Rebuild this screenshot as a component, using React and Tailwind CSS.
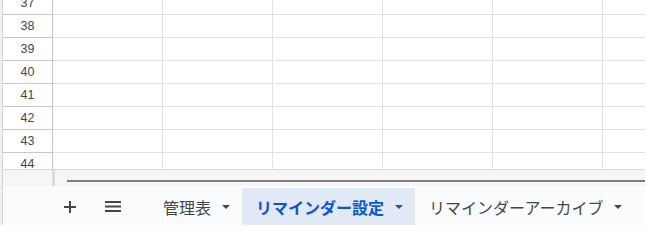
import React from "react";

const rows = [37, 38, 39, 40, 41, 42, 43, 44];
const cols = [0, 1, 2, 3, 4, 5];

function Arrow({ color }) {
  return (
    <svg width="8" height="4" viewBox="0 0 8 4" className="shrink-0">
      <path d="M0 0 L8 0 L4 4 Z" fill={color} />
    </svg>
  );
}

function Tab({ label, active }) {
  return (
    <div
      className={
        "flex h-[37px] shrink-0 items-center pl-[14px] pr-[12px] " +
        (active ? "bg-[#e1e9f7] text-[#0b57d0] font-bold" : "text-[#444746]")
      }
    >
      <span className="whitespace-nowrap text-[16px] leading-none">{label}</span>
      <span className="ml-[11px] flex items-center">
        <Arrow color={active ? "#0b57d0" : "#444746"} />
      </span>
    </div>
  );
}

export default function App() {
  return (
    <div
      className="flex h-[225px] w-[645px] flex-col overflow-hidden bg-[#f0f1f2] pl-[2px]"
      style={{ fontFamily: '"Noto Sans CJK JP", "Liberation Sans", sans-serif' }}
    >
      <div className="flex h-full flex-col border-l border-[#d4d4d4]">
        {/* grid */}
        <div className="h-[170px] shrink-0 overflow-hidden border-b border-[#d9d9d9] bg-white">
          <div className="-mt-[8px] flex flex-col">
            {rows.map((r) => (
              <div key={r} className="flex h-[23px] shrink-0">
                <div
                  className="flex w-[50px] shrink-0 items-center justify-center border-b border-r border-[#c7c7c7] text-[12.5px] text-[#444746]"
                  style={{ fontFamily: '"Liberation Sans", Arial, sans-serif' }}
                >
                  {r}
                </div>
                {cols.map((c) => (
                  <div
                    key={c}
                    className="w-[110px] shrink-0 border-b border-r border-[#e1e1e1]"
                  />
                ))}
              </div>
            ))}
          </div>
        </div>
        {/* scroll row */}
        <div className="flex h-[16px] shrink-0 bg-[#f6f6f6]">
          <div className="w-[49px] shrink-0" />
          <div className="w-[3px] shrink-0 bg-[#dadada]" />
          <div className="flex-1 pl-[12px] pt-[10px]">
            <div className="h-[2px] w-full bg-[#7b7e82]" />
          </div>
        </div>
        {/* tab bar */}
        <div className="flex flex-1 items-end bg-[#f9fbfd] pt-[2px]">
          <div className="flex h-[37px] items-center">
            <div className="ml-[51px] flex h-[32px] w-[32px] items-center justify-center">
              <svg width="12" height="12" viewBox="0 0 12 12">
                <rect x="5" y="0" width="2" height="12" fill="#444746" />
                <rect x="0" y="5" width="12" height="2" fill="#444746" />
              </svg>
            </div>
            <div className="ml-[11px] flex h-[32px] w-[32px] items-center justify-center">
              <svg width="16" height="11" viewBox="0 0 16 11">
                <rect x="0" y="0" width="16" height="2" fill="#444746" />
                <rect x="0" y="4.5" width="16" height="2" fill="#444746" />
                <rect x="0" y="9" width="16" height="2" fill="#444746" />
              </svg>
            </div>
            <div className="ml-[20px] flex items-center">
              <Tab label="管理表" />
              <Tab label="リマインダー設定" active />
              <Tab label="リマインダーアーカイブ" />
            </div>
          </div>
        </div>
      </div>
    </div>
  );
}
